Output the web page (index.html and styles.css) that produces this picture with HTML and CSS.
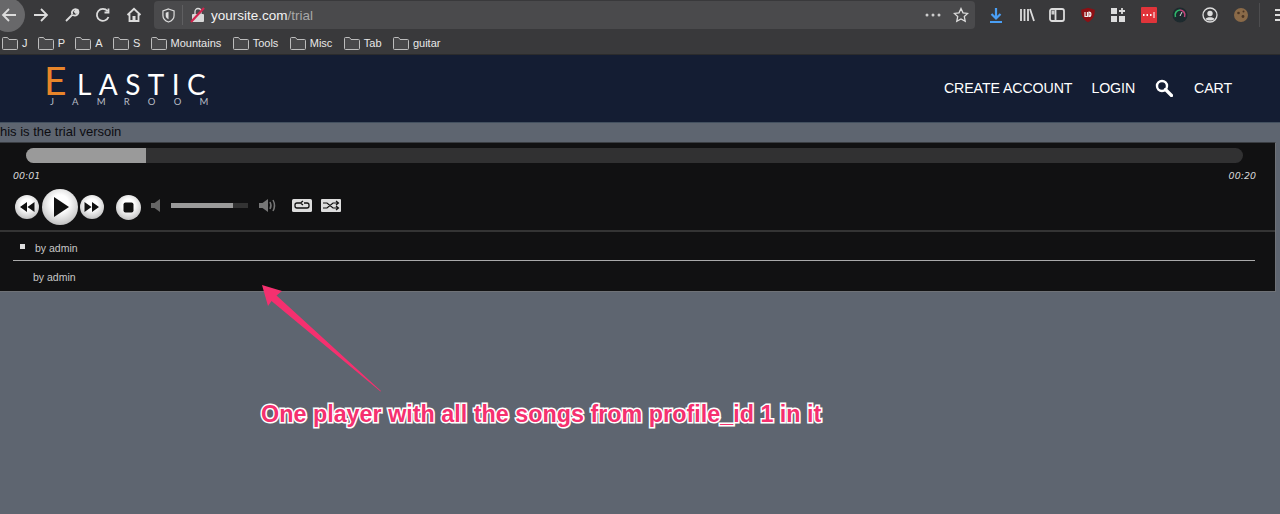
FILE: index.html
```html
<!DOCTYPE html>
<html lang="en">
<head>
<meta charset="utf-8">
<title>Elastic Jamroom trial</title>
<link rel="stylesheet" href="styles.css">
</head>
<body>
<div class="toolbar">
  <div class="nav-group">
    <span class="back"><svg class="ic" viewBox="0 0 16 16"><path d="M15 8H2M8 2L2 8l6 6" class="st"/></svg></span>
    <svg class="ic" viewBox="0 0 16 16"><path d="M1 8h13M8 2l6 6-6 6" class="st"/></svg>
    <svg class="ic" viewBox="0 0 16 16"><path d="M2 14l6.500-6.500M8.500 7.500A3.500 3.500 0 0 1 13 2.500L10.800 4.800l1.200 1.200L14.200 3.900A3.500 3.500 0 0 1 9 8" class="st"/></svg>
    <svg class="ic" viewBox="0 0 16 16"><path d="M13.500 10A6 6 0 1 1 12.500 4M13.500 1.500V5.500H9.500" class="st"/></svg>
    <svg class="ic" viewBox="0 0 16 16"><path d="M1.500 8L8 1.800 14.500 8M3.500 7v7h9V7" class="st"/><rect x="6.500" y="9" width="3" height="5" fill="#ddd"/></svg>
  </div>
  <div class="urlbar">
    <svg class="shield" viewBox="0 0 14 16"><path d="M7 1l6 2v5c0 3.500-3 6-6 7-3-1-6-3.500-6-7V3z" class="st thin"/><path d="M7 4v8c-2-1-3-2-3-4V5z" fill="#ddd"/></svg>
    <span class="url-sep"></span>
    <svg class="lock" viewBox="0 0 16 16"><rect x="2" y="7" width="12" height="8" rx="1" fill="#d8d8d8"/><path d="M5 7V4.500a3 3 0 0 1 6 0V7" class="st thin"/><path d="M1 15L14 1" stroke="#d0244e" stroke-width="2.200"/></svg>
    <span class="url"><span class="host">yoursite.com</span><span class="path">/trial</span></span>
    <svg class="dots" viewBox="0 0 16 4"><circle cx="2" cy="2" r="1.500" fill="#ccc"/><circle cx="8" cy="2" r="1.500" fill="#ccc"/><circle cx="14" cy="2" r="1.500" fill="#ccc"/></svg>
    <svg class="ic" viewBox="0 0 16 16"><path d="M8 1.500l2 4.300 4.700.6-3.400 3.200.9 4.700L8 12l-4.200 2.300.9-4.700L1.300 6.400 6 5.800z" class="st thin"/></svg>
  </div>
  <div class="tools">
    <svg class="ic" viewBox="0 0 16 16"><path d="M8 1v10M3.500 7L8 11.500 12.500 7" stroke="#4a9ff5" stroke-width="2.200" fill="none"/><path d="M2 15h12" stroke="#4a9ff5" stroke-width="2"/></svg>
    <svg class="ic" viewBox="0 0 16 16"><path d="M2 2v12M5.500 2v12M9 2v12M11 2l4 12" class="st"/></svg>
    <svg class="ic" viewBox="0 0 16 16"><rect x="1" y="2" width="14" height="12" rx="2" class="st"/><path d="M6.500 2v12" class="st"/><rect x="2.500" y="3.500" width="3" height="4" fill="#ccc"/></svg>
    <svg class="ic" viewBox="0 0 16 16"><path d="M8 .8l6.800 2c0 6-1.800 10-6.800 12.400C3 12.800 1.200 8.800 1.200 2.800z" fill="#8d0f14"/><path d="M5 5v4.500h2.500V5M9 5v4.500c2.500 0 2.500-4.500 0-4.500z" stroke="#eee" stroke-width="1.200" fill="none"/></svg>
    <svg class="ic" viewBox="0 0 16 16"><rect x="1" y="1" width="6" height="6" fill="#ddd"/><rect x="1" y="9" width="6" height="6" fill="#ddd"/><rect x="9" y="9" width="6" height="6" fill="#ddd"/><path d="M12 1v6M9 4h6" class="st"/></svg>
    <svg class="ic" viewBox="0 0 16 16"><rect width="16" height="16" rx="1" fill="#e0343a"/><path d="M2 8h1.500M5.500 8H7M9 8h1.500" stroke="#fff" stroke-width="1.800"/><path d="M13 5v6" stroke="#fff"/></svg>
    <svg class="ic" viewBox="0 0 16 16"><circle cx="8" cy="8" r="7.500" fill="#1d2a2e"/><path d="M3.500 10A5 5 0 0 1 8 3" stroke="#2fb86a" stroke-width="1.600" fill="none"/><path d="M8 3a5 5 0 0 1 4.500 7" stroke="#c0457a" stroke-width="1.600" fill="none"/><path d="M8 9l2-4" stroke="#ddd"/></svg>
    <svg class="ic" viewBox="0 0 16 16"><circle cx="8" cy="8" r="7" class="st thin"/><circle cx="8" cy="6.500" r="2.700" fill="#ddd"/><path d="M3.500 12c1-2.500 8-2.500 9 0-2 2-7 2-9 0z" fill="#ddd"/></svg>
    <svg class="ic" viewBox="0 0 16 16"><circle cx="8" cy="8" r="7" fill="#8a6a48"/><circle cx="5.500" cy="6" r="1.300" fill="#4a3524"/><circle cx="10" cy="9.500" r="1.400" fill="#4a3524"/><circle cx="10.500" cy="4.500" r="1" fill="#4a3524"/></svg>
    <span class="tool-sep"></span>
    <svg class="menu" viewBox="0 0 16 16"><path d="M0 3h16M0 8h16M0 13h16" class="st"/></svg>
  </div>
</div>

<div class="bookmarks">
  <span class="bm short"><svg class="folder" viewBox="0 0 16 14"><path d="M.5 2.500a1 1 0 0 1 1-1h4l1.500 2h7.500a1 1 0 0 1 1 1v8a1 1 0 0 1-1 1h-13a1 1 0 0 1-1-1z"/></svg>J</span>
  <span class="bm short"><svg class="folder" viewBox="0 0 16 14"><path d="M.5 2.500a1 1 0 0 1 1-1h4l1.500 2h7.500a1 1 0 0 1 1 1v8a1 1 0 0 1-1 1h-13a1 1 0 0 1-1-1z"/></svg>P</span>
  <span class="bm short"><svg class="folder" viewBox="0 0 16 14"><path d="M.5 2.500a1 1 0 0 1 1-1h4l1.500 2h7.500a1 1 0 0 1 1 1v8a1 1 0 0 1-1 1h-13a1 1 0 0 1-1-1z"/></svg>A</span>
  <span class="bm short"><svg class="folder" viewBox="0 0 16 14"><path d="M.5 2.500a1 1 0 0 1 1-1h4l1.500 2h7.500a1 1 0 0 1 1 1v8a1 1 0 0 1-1 1h-13a1 1 0 0 1-1-1z"/></svg>S</span>
  <span class="bm"><svg class="folder" viewBox="0 0 16 14"><path d="M.5 2.500a1 1 0 0 1 1-1h4l1.500 2h7.500a1 1 0 0 1 1 1v8a1 1 0 0 1-1 1h-13a1 1 0 0 1-1-1z"/></svg>Mountains</span>
  <span class="bm"><svg class="folder" viewBox="0 0 16 14"><path d="M.5 2.500a1 1 0 0 1 1-1h4l1.500 2h7.500a1 1 0 0 1 1 1v8a1 1 0 0 1-1 1h-13a1 1 0 0 1-1-1z"/></svg>Tools</span>
  <span class="bm"><svg class="folder" viewBox="0 0 16 14"><path d="M.5 2.500a1 1 0 0 1 1-1h4l1.500 2h7.500a1 1 0 0 1 1 1v8a1 1 0 0 1-1 1h-13a1 1 0 0 1-1-1z"/></svg>Misc</span>
  <span class="bm"><svg class="folder" viewBox="0 0 16 14"><path d="M.5 2.500a1 1 0 0 1 1-1h4l1.500 2h7.500a1 1 0 0 1 1 1v8a1 1 0 0 1-1 1h-13a1 1 0 0 1-1-1z"/></svg>Tab</span>
  <span class="bm"><svg class="folder" viewBox="0 0 16 14"><path d="M.5 2.500a1 1 0 0 1 1-1h4l1.500 2h7.500a1 1 0 0 1 1 1v8a1 1 0 0 1-1 1h-13a1 1 0 0 1-1-1z"/></svg>guitar</span>
</div>

<header class="site-header">
  <div class="logo">
    <div class="logo-main"><span class="logo-e">E</span><span class="logo-rest">LASTIC</span></div>
    <div class="logo-sub">JAMROOM</div>
  </div>
  <nav class="site-nav">
    <a>CREATE ACCOUNT</a>
    <a>LOGIN</a>
    <svg class="search" viewBox="0 0 18 18"><circle cx="7" cy="7" r="5" fill="none" stroke="#fff" stroke-width="2.400"/><path d="M10.500 10.500L16.500 16.500" stroke="#fff" stroke-width="3.200" stroke-linecap="round"/></svg>
    <a>CART</a>
  </nav>
</header>

<main class="content">
  <p class="intro">This is the trial versoin</p>
  <section class="player">
    <div class="progress"><div class="progress-fill"></div></div>
    <div class="times"><span>00:01</span><span>00:20</span></div>
    <div class="controls">
      <button class="btn small"><svg viewBox="0 0 24 24"><path d="M12 7v10l-7-5zM19.500 7v10l-7-5z" fill="#111"/></svg></button>
      <button class="btn large"><svg viewBox="0 0 36 36"><path d="M12 8l15 10-15 10z" fill="#111"/></svg></button>
      <button class="btn small"><svg viewBox="0 0 24 24"><path d="M4.500 7v10l7-5zM12 7v10l7-5z" fill="#111"/></svg></button>
      <button class="btn stop"><svg viewBox="0 0 25 25"><rect x="7.500" y="7.500" width="10" height="10" rx="2" fill="#111"/></svg></button>
      <svg class="vol-min" viewBox="0 0 9 13"><path d="M0 4h3.500L9 0v13L3.500 9H0z" fill="#666"/></svg>
      <div class="volume"><div class="volume-fill"></div></div>
      <svg class="vol-max" viewBox="0 0 18 15"><path d="M0 5h3.500L9 1v13L3.500 10H0z" fill="#777"/><path d="M11 4q2 3.500 0 7M14 2q3 5.500 0 11" stroke="#777" stroke-width="1.500" fill="none"/></svg>
      <svg class="toggle repeat" viewBox="0 0 20 13"><rect width="20" height="13" rx="1.500" fill="#ddd"/><path d="M8 4H5a2 2 0 0 0-2 2v1a2 2 0 0 0 2 2h10a2 2 0 0 0 2-2V6a2 2 0 0 0-2-2h-3M11 2L8.500 4 11 6" stroke="#111" stroke-width="1.300" fill="none"/></svg>
      <svg class="toggle" viewBox="0 0 20 13"><rect width="20" height="13" rx="1" fill="#ddd"/><path d="M2 4h4l6 5h5M2 9h4l6-5h5M15 2l2.500 2L15 6M15 7l2.500 2-2.500 2" stroke="#111" stroke-width="1.200" fill="none"/></svg>
    </div>
    <ul class="playlist">
      <li class="track current"><span class="bullet"></span>by admin</li>
      <li class="track">by admin</li>
    </ul>
  </section>
</main>

<svg class="arrow" viewBox="0 0 130 115"><path d="M1 1L21 7 15.500 11.500 120 107 119.500 107.500 10.500 17 7 22z" fill="#f5306f"/></svg>
<div class="note">One player with all the songs from profile_id 1 in it</div>
</body>
</html>
```
FILE: styles.css
```css
* { box-sizing: border-box; }
html, body { margin: 0; height: 100%; }
body {
  width: 1280px;
  height: 514px;
  overflow: hidden;
  position: relative;
  background: #5e6570;
  font-family: "Liberation Sans", Arial, sans-serif;
}
svg { display: block; flex: none; }
.st { fill: none; stroke: #dcdcdc; stroke-width: 1.800; }
.thin { stroke-width: 1.300; }

.toolbar {
  height: 30px;
  display: flex;
  align-items: center;
  background: #39393b;
  margin-left: -9px;
  width: 1300px;
}
.nav-group { display: flex; align-items: center; gap: 15px; }
.back {
  width: 34px;
  height: 34px;
  border-radius: 50%;
  background: #68686a;
  display: flex;
  align-items: center;
  justify-content: flex-end;
  padding-right: 8px;
  margin-right: -7px;
}
.ic { width: 16px; height: 16px; }
.urlbar {
  width: 822px;
  height: 28px;
  margin-left: 12px;
  background: #4a4a4c;
  border-radius: 4px;
  display: flex;
  align-items: center;
  padding: 0 6px 0 8px;
}
.shield { width: 13px; height: 15px; }
.url-sep { width: 1px; height: 20px; background: #5f5f61; margin: 0 7px; }
.lock { width: 16px; height: 16px; }
.url { margin-left: 5px; font-size: 13.500px; flex: 1; }
.host { color: #f2f2f2; }
.path { color: #a8a8a8; }
.dots { width: 16px; height: 4px; margin-right: 12px; }
.tools {
  display: flex;
  align-items: center;
  gap: 14.600px;
  margin-left: 13px;
}
.tool-sep { width: 1px; height: 24px; background: #4d4d4f; margin-left: -4px; }
.menu { width: 16px; height: 16px; }

.bookmarks {
  height: 25px;
  background: #39393b;
  border-bottom: 1px solid #2b2b2c;
  display: flex;
  align-items: center;
  padding-left: 2px;
  padding-top: 2px;
  gap: 11.400px;
  font-size: 11px;
  color: #e8e8e8;
}
.bm { display: flex; align-items: center; gap: 4px; }
.short { margin-right: -1.150px; }
.folder { width: 16px; height: 14px; fill: #48484a; stroke: #bdbdbd; stroke-width: 1; }

.site-header {
  height: 68px;
  background: #141d33;
  border-bottom: 1px solid #43505f;
  display: flex;
  justify-content: space-between;
  align-items: center;
  padding: 0 48px 2px 44px;
}
.logo { font-family: Lato, sans-serif; color: #fff; margin-top: -3px; }
.logo-main { display: flex; align-items: baseline; }
.logo-e { font-size: 39px; line-height: 30px; color: #e8852a; width: 33px; }
.logo-rest { font-size: 28px; line-height: 22px; letter-spacing: 7.400px; }
.logo-sub { font-size: 9.500px; letter-spacing: 18.200px; margin: 2px 0 0 6px; color: #b9bdc6; line-height: 10px; white-space: nowrap; width: 170px; }
.site-nav { display: flex; align-items: center; color: #fff; font-size: 14.200px; }
.site-nav a { letter-spacing: -0.100px; }
.site-nav a:first-child { margin-right: 19px; }
.search { width: 18px; height: 18px; margin: 0 21px 0 20px; }

.content { margin-left: -8px; width: 1284px; }
.intro { margin: 0; font-size: 13px; line-height: 15px; height: 19px; color: #0c0c10; padding-top: 1px; }
.player {
  height: 150px;
  background: #111112;
  border: 1px solid #6f7277;
  border-top-color: #3a3d42;
  position: relative;
  padding: 5px 0 0 33px;
}
.progress { width: 1217px; height: 15px; border-radius: 7.500px; background: #313132; overflow: hidden; }
.progress-fill { width: 120px; height: 100%; background: #9a9a9a; }
.times {
  display: flex;
  justify-content: space-between;
  width: 1243px;
  margin: 7px 0 0 -13px;
  font-style: italic;
  line-height: 12px;
  color: #d6d6d6;
  font-family: "DejaVu Sans", sans-serif;
  font-size: 9.500px;
}
.controls { display: flex; align-items: center; height: 38px; margin: 6px 0 0 -11px; position: relative; }
.btn {
  padding: 0;
  border: 0;
  border-radius: 50%;
  background: radial-gradient(circle at 50% 40%, #fff 30%, #d2d2d2 65%, #9a9a9a 100%);
  flex: none;
}
.btn svg { width: 100%; height: 100%; }
.small { width: 24px; height: 24px; }
.large { width: 36px; height: 36px; margin: 0 2px 0 3px; }
.stop { width: 25px; height: 25px; margin-left: 12px; }
.vol-min { width: 9px; height: 13px; margin: -4px 0 0 10px; }
.volume { width: 77px; height: 5px; background: #333; margin: -3px 0 0 11px; }
.volume-fill { width: 62px; height: 100%; background: #9a9a9a; }
.vol-max { width: 18px; height: 15px; margin: -3px 0 0 11px; }
.toggle { width: 20px; height: 13px; margin: -4px 0 0 9px; }
.repeat { margin-left: 15px; }
.playlist {
  list-style: none;
  margin: 4px 0 0 -33px;
  padding: 0 20px 0 20px;
  border-top: 2px solid #343434;
  font-size: 10.500px;
  color: #c8c8c8;
}
.track { height: 30px; display: flex; align-items: center; padding: 2px 0 0 20px; }
.current { height: 29px; border-bottom: 1px solid #aaaaaa; position: relative; padding: 3px 0 0 22px; }
.bullet { width: 5px; height: 5px; background: #ddd; position: absolute; left: 7px; top: 12px; }

.arrow { position: absolute; left: 261px; top: 284px; width: 130px; height: 115px; }
.note {
  position: absolute;
  left: 261px;
  top: 400px;
  font-size: 23.350px;
  font-weight: 700;
  line-height: 28px;
  white-space: nowrap;
  color: #f5306f;
  -webkit-text-stroke: 3px #fff;
  paint-order: stroke fill;
}
```
